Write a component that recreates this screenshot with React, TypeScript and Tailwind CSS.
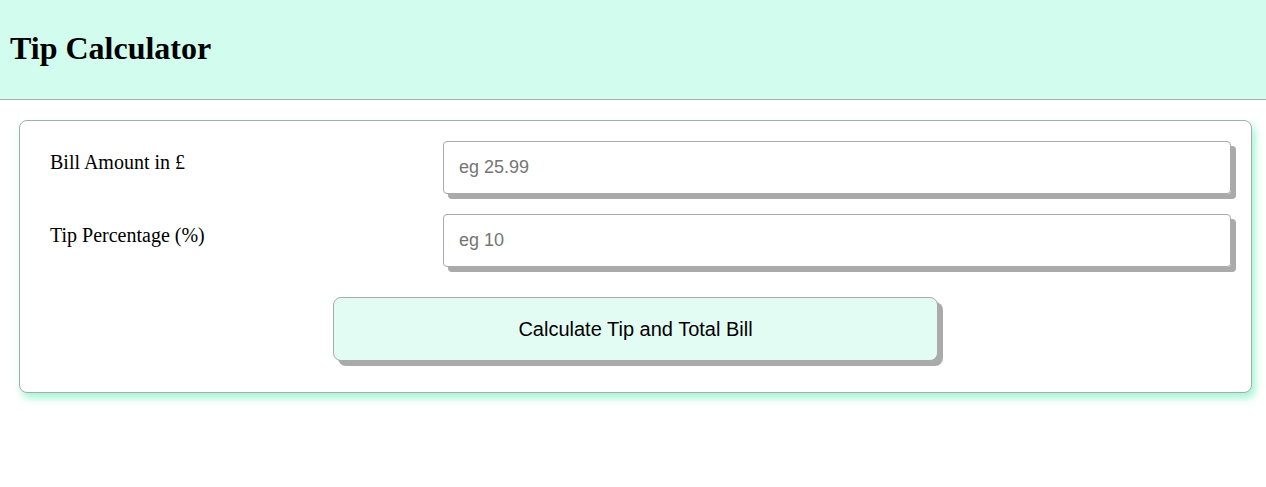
import React, { useState } from 'react';

const serif = { fontFamily: '"Liberation Serif", "Times New Roman", serif' };
const sans = { fontFamily: '"Liberation Sans", Arial, sans-serif' };

export default function App() {
  const [bill, setBill] = useState('');
  const [tip, setTip] = useState('');

  return (
    <div className="min-h-screen bg-white" style={serif}>
      {/* Header */}
      <header className="h-[100px] bg-[#d2fced] border-b border-[#aaaaaa] flex items-center px-[10px] pb-[4px]">
        <h1 className="text-[32px] font-bold text-black leading-none">Tip Calculator</h1>
      </header>

      {/* Card */}
      <div className="mt-[20px] ml-[19px] mr-[14px] border border-[#aaaaaa] rounded-[8px] bg-white shadow-[3px_5px_8px_#9ef5d4] pt-[20px] pb-[31px] pl-[30px] pr-[20px]">
        <div className="flex items-start">
          <label className="w-[393px] pt-[10px] text-[20px] text-black leading-[23px]">Bill Amount in £</label>
          <input
            value={bill}
            onChange={(e) => setBill(e.target.value)}
            placeholder="eg 25.99"
            className="flex-1 h-[53px] border border-[#aaaaaa] rounded-[4px] shadow-[5px_5px_0_#aaaaaa] px-[15px] text-[18px] placeholder:text-[#757575] outline-none"
            style={sans}
          />
        </div>

        <div className="flex items-start mt-[20px]">
          <label className="w-[393px] pt-[10px] text-[20px] text-black leading-[23px]">Tip Percentage (%)</label>
          <input
            value={tip}
            onChange={(e) => setTip(e.target.value)}
            placeholder="eg 10"
            className="flex-1 h-[53px] border border-[#aaaaaa] rounded-[4px] shadow-[5px_5px_0_#aaaaaa] px-[15px] text-[18px] placeholder:text-[#757575] outline-none"
            style={sans}
          />
        </div>

        <div className="flex justify-center mt-[30px] pr-[10px]">
          <button
            className="w-[605px] h-[64px] bg-[#e3fcf3] border border-[#aaaaaa] rounded-[8px] shadow-[5px_5px_0_#aaaaaa] text-[20px] text-black"
            style={sans}
          >
            Calculate Tip and Total Bill
          </button>
        </div>
      </div>
    </div>
  );
}
